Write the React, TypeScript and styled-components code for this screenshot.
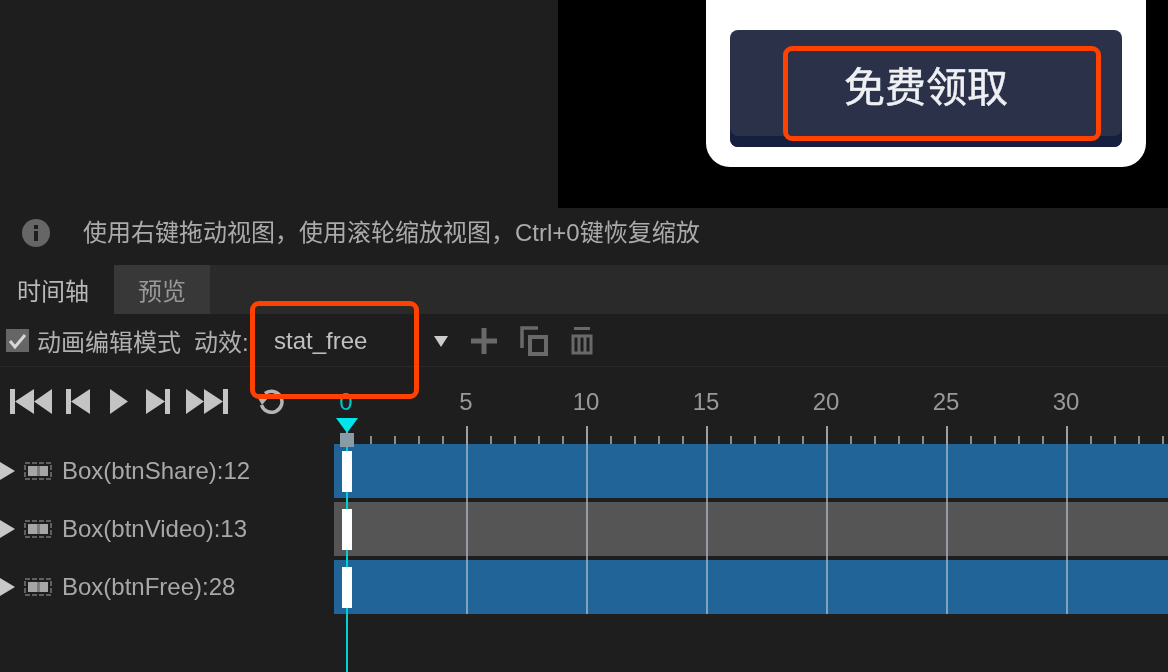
import styled, { createGlobalStyle } from "styled-components";

const GlobalStyle = createGlobalStyle`
  html, body {
    margin: 0;
    padding: 0;
    background: #1e1e1e;
  }
  * {
    box-sizing: border-box;
  }
`;

const rulerLabels = [0, 5, 10, 15, 20, 25, 30];

const tracks = [
  { name: "Box(btnShare):12", active: true },
  { name: "Box(btnVideo):13", active: false },
  { name: "Box(btnFree):28", active: true },
];

const BoxIcon = () => (
  <svg width="28" height="18" viewBox="0 0 28 18">
    <rect x="1" y="1" width="26" height="16" fill="none" stroke="#777" strokeWidth="1.5" strokeDasharray="5 2" />
    <rect x="4" y="4" width="20" height="10" fill="#a6a6a6" />
    <rect x="13" y="4" width="3" height="10" fill="#7c7c7c" />
  </svg>
);

const App = () => {
  return (
    <Page>
      <GlobalStyle />
      <Stage>
        <SidePane />
        <Viewport>
          <Card>
            <ClaimButton>
              免费领取
              <Highlight $left={53} $top={16} $width={318} $height={95} />
            </ClaimButton>
          </Card>
        </Viewport>
      </Stage>

      <InfoBar>
        <svg width="28" height="28" viewBox="0 0 28 28">
          <circle cx="14" cy="14" r="14" fill="#666" />
          <rect x="12" y="6" width="4" height="4" fill="#1e1e1e" />
          <rect x="12" y="12" width="4" height="10" fill="#1e1e1e" />
        </svg>
        <InfoText>使用右键拖动视图，使用滚轮缩放视图，Ctrl+0键恢复缩放</InfoText>
      </InfoBar>

      <TabBar>
        <Tab $active>时间轴</Tab>
        <Tab>预览</Tab>
      </TabBar>

      <Toolbar>
        <CheckBox>
          <svg width="23" height="23" viewBox="0 0 23 23">
            <path d="M4 12l5 6 10-12" fill="none" stroke="#d8d8d8" strokeWidth="3" />
          </svg>
        </CheckBox>
        <ToolLabel>动画编辑模式</ToolLabel>
        <EffectLabel>动效:</EffectLabel>
        <EffectSelect>
          stat_free
          <Highlight $left={-24} $top={-25} $width={169} $height={98} />
        </EffectSelect>
        <ToolIcons>
          <svg width="14" height="11" viewBox="0 0 14 11">
            <path d="M0 0h14L7 11z" fill="#ccc" />
          </svg>
          <svg width="26" height="26" viewBox="0 0 26 26">
            <path d="M10.5 0h5v10.5H26v5H15.500V26h-5V15.500H0v-5h10.500z" fill="#696969" />
          </svg>
          <svg width="28" height="30" viewBox="0 0 28 30">
            <path d="M18 2H2v20" fill="none" stroke="#696969" strokeWidth="3.500" />
            <rect x="10" y="11" width="16" height="17" fill="none" stroke="#696969" strokeWidth="4" />
          </svg>
          <svg width="22" height="28" viewBox="0 0 22 28">
            <path d="M3 0h16v3H3z" fill="#696969" />
            <path d="M2 9h18v17H2zM8 9v17M14 9v17" fill="none" stroke="#696969" strokeWidth="3" />
          </svg>
        </ToolIcons>
      </Toolbar>

      <Timeline>
        <LabelColumn>
          <Transport>
            <TransportButton>
              <svg width="42" height="25" viewBox="0 0 42 25">
                <path d="M0 0h5v25H0zM24 0v25L5 12.500zM42 0v25L24 12.500z" fill="#c4c4c4" />
              </svg>
            </TransportButton>
            <TransportButton $gap={14}>
              <svg width="24" height="25" viewBox="0 0 24 25">
                <path d="M0 0h5v25H0zM24 0v25L5 12.500z" fill="#c4c4c4" />
              </svg>
            </TransportButton>
            <TransportButton $gap={20}>
              <svg width="18" height="25" viewBox="0 0 18 25">
                <path d="M0 0l18 12.500L0 25z" fill="#c4c4c4" />
              </svg>
            </TransportButton>
            <TransportButton $gap={18}>
              <svg width="24" height="25" viewBox="0 0 24 25">
                <path d="M19 0h5v25h-5zM0 0v25l19-12.500z" fill="#c4c4c4" />
              </svg>
            </TransportButton>
            <TransportButton $gap={16}>
              <svg width="42" height="25" viewBox="0 0 42 25">
                <path d="M37 0h5v25h-5zM18 0v25l19-12.500zM0 0v25l18-12.500z" fill="#c4c4c4" />
              </svg>
            </TransportButton>
            <TransportButton $gap={30}>
              <svg width="26" height="25" viewBox="0 0 26 25">
                <path d="M7 4.500A10.500 10.500 0 1 1 3.500 16" fill="none" stroke="#b4b4b4" strokeWidth="3.500" />
                <path d="M0 9h10l-6 7z" fill="#b4b4b4" />
              </svg>
            </TransportButton>
          </Transport>
          <TrackLabels>
            {tracks.map((track) => (
              <TrackLabel key={track.name}>
                <svg width="15" height="18" viewBox="0 0 15 18">
                  <path d="M0 0l15 9L0 18z" fill="#c8c8c8" />
                </svg>
                <BoxIcon />
                <TrackName>{track.name}</TrackName>
              </TrackLabel>
            ))}
          </TrackLabels>
        </LabelColumn>

        <TrackColumn>
          <Ruler>
            <RulerNumbers>
              {rulerLabels.map((n) => (
                <RulerNumber key={n} $current={n === 0}>
                  {n}
                </RulerNumber>
              ))}
            </RulerNumbers>
            <RulerTicks />
          </Ruler>
          <TrackList>
            {tracks.map((track) => (
              <TrackRow key={track.name} $active={track.active}>
                <Keyframe />
              </TrackRow>
            ))}
          </TrackList>
          <Playhead>
            <svg width="22" height="15" viewBox="0 0 22 15">
              <path d="M0 0h22L11 15z" fill="#00e5ea" />
            </svg>
            <PlayheadHandle />
          </Playhead>
        </TrackColumn>
      </Timeline>
    </Page>
  );
};

const Page = styled.div`
  width: 1168px;
  height: 672px;
  overflow: hidden;
  display: flex;
  flex-direction: column;
  background: #1e1e1e;
  font-family: "Liberation Sans", "Noto Sans CJK SC", sans-serif;
  font-size: 24px;
  color: #b0b0b0;
  filter: blur(0.6px);
`;

const Stage = styled.div`
  height: 208px;
  display: flex;
`;

const SidePane = styled.div`
  width: 558px;
  background: #1e1e1e;
`;

const Viewport = styled.div`
  flex: 1;
  background: #000;
  padding: 0 22px 0 148px;
`;

const Card = styled.div`
  height: 167px;
  padding: 30px 24px 20px;
  background: #fff;
  border-radius: 0 0 24px 24px;
`;

const ClaimButton = styled.div`
  position: relative;
  height: 117px;
  padding-bottom: 10px;
  display: flex;
  align-items: center;
  justify-content: center;
  border-radius: 8px;
  background: #2a3149;
  box-shadow: inset 0 -11px 0 #14203e;
  color: #eef0f3;
  font-size: 41px;
  -webkit-text-stroke: 0.5px #eef0f3;
`;

const Highlight = styled.div<{ $left: number; $top: number; $width: number; $height: number }>`
  position: absolute;
  left: ${(p) => p.$left}px;
  top: ${(p) => p.$top}px;
  width: ${(p) => p.$width}px;
  height: ${(p) => p.$height}px;
  border: 5px solid #ff4200;
  border-radius: 9px;
  z-index: 5;
  -webkit-text-stroke: 0;
`;

const InfoBar = styled.div`
  height: 57px;
  padding: 0 0 7px 22px;
  display: flex;
  align-items: center;
  gap: 33px;
`;

const InfoText = styled.span`
  margin-bottom: 6px;
  color: #ababab;
`;

const TabBar = styled.div`
  height: 49px;
  display: flex;
  background: #2a2a2a;
`;

const Tab = styled.div<{ $active?: boolean }>`
  width: ${(p) => (p.$active ? 114 : 96)}px;
  padding-left: ${(p) => (p.$active ? 17 : 24)}px;
  display: flex;
  align-items: center;
  background: ${(p) => (p.$active ? "#1e1e1e" : "#383838")};
  color: ${(p) => (p.$active ? "#b8b8b8" : "#999")};
`;

const Toolbar = styled.div`
  height: 53px;
  padding-left: 6px;
  display: flex;
  align-items: center;
  border-bottom: 1px solid #2a2a2a;
`;

const CheckBox = styled.div`
  width: 23px;
  height: 23px;
  background: #666;
`;

const ToolLabel = styled.span`
  margin-left: 8px;
`;

const EffectLabel = styled.span`
  margin-left: 13px;
  width: 80px;
`;

const EffectSelect = styled.div`
  position: relative;
  width: 160px;
  padding-top: 1px;
  color: #c0c0c0;
`;

const ToolIcons = styled.div`
  padding-top: 2px;
  display: flex;
  align-items: center;
  gap: 23px;
`;

const Timeline = styled.div`
  flex: 1;
  display: flex;
  min-height: 0;
`;

const LabelColumn = styled.div`
  width: 334px;
  flex: none;
`;

const Transport = styled.div`
  height: 77px;
  padding: 22px 0 0 10px;
  display: flex;
  align-items: flex-start;
`;

const TransportButton = styled.div<{ $gap?: number }>`
  margin-left: ${(p) => p.$gap ?? 0}px;
  height: 25px;
`;

const TrackLabels = styled.div`
  display: flex;
  flex-direction: column;
  gap: 4px;
`;

const TrackLabel = styled.div`
  height: 54px;
  display: flex;
  align-items: center;
  gap: 9px;
`;

const TrackName = styled.span`
  margin-left: 1px;
  color: #a8a8a8;
`;

const TrackColumn = styled.div`
  position: relative;
  flex: 1;
  min-width: 0;
`;

const Ruler = styled.div`
  height: 77px;
  display: flex;
  flex-direction: column;
  justify-content: space-between;
`;

const RulerNumbers = styled.div`
  margin: 21px 0 0 -48px;
  display: flex;
`;

const RulerNumber = styled.div<{ $current?: boolean }>`
  width: 120px;
  flex: none;
  text-align: center;
  line-height: 28px;
  color: ${(p) => (p.$current ? "#00c8cc" : "#999")};
`;

const RulerTicks = styled.div`
  height: 18px;
  background:
    linear-gradient(90deg, #a0a0a0 2px, transparent 2px) 12px 0 / 120px 100% repeat-x,
    linear-gradient(90deg, #8b8b8b 2px, transparent 2px) 12px 100% / 24px 8px repeat-x;
`;

const TrackList = styled.div`
  position: relative;
  display: flex;
  flex-direction: column;
  gap: 4px;

  &::after {
    content: "";
    position: absolute;
    inset: 0;
    background: linear-gradient(90deg, rgba(195, 205, 215, 0.6) 2px, transparent 2px) 12px 0 / 120px 100% repeat-x;
  }
`;

const TrackRow = styled.div<{ $active?: boolean }>`
  height: 54px;
  padding-left: 8px;
  display: flex;
  align-items: center;
  background: ${(p) => (p.$active ? "#216498" : "#555")};
`;

const Keyframe = styled.div`
  position: relative;
  z-index: 3;
  width: 10px;
  height: 41px;
  background: #fff;
`;

const Playhead = styled.div`
  position: absolute;
  top: 51px;
  bottom: 0;
  left: 2px;
  width: 22px;
  display: flex;
  flex-direction: column;
  align-items: center;
  z-index: 2;

  &::after {
    content: "";
    flex: 1;
    width: 2px;
    background: #00d0d4;
  }
`;

const PlayheadHandle = styled.div`
  width: 14px;
  height: 14px;
  background: #8a9ba8;
`;

export default App;
